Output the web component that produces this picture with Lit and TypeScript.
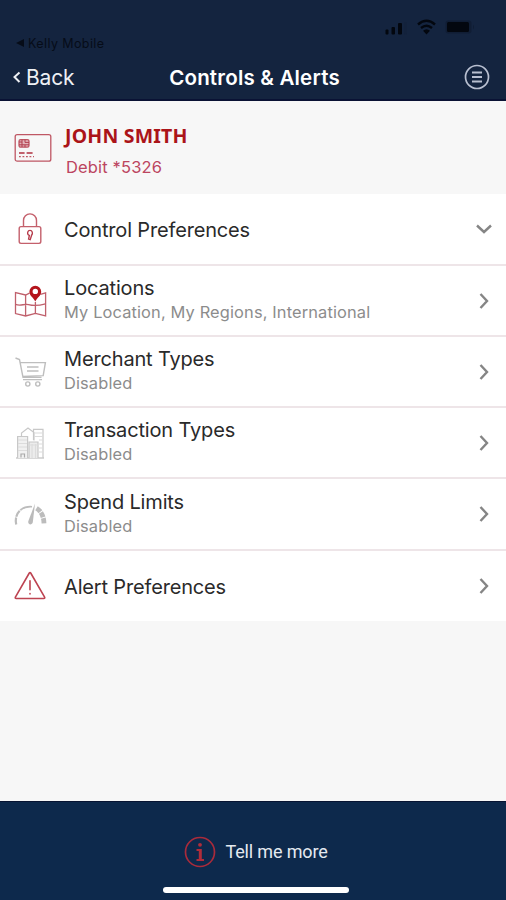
import { LitElement, html, css, svg, nothing } from "lit";
import { customElement } from "lit/decorators.js";

interface Item {
  key: string;
  title: string;
  detail?: string;
  open?: boolean;
}

const items: Item[] = [
  { key: "lock", title: "Control Preferences", open: true },
  { key: "map", title: "Locations", detail: "My Location, My Regions, International" },
  { key: "cart", title: "Merchant Types", detail: "Disabled" },
  { key: "city", title: "Transaction Types", detail: "Disabled" },
  { key: "gauge", title: "Spend Limits", detail: "Disabled" },
  { key: "alert", title: "Alert Preferences" },
];

const glyphs: Record<string, unknown> = {
  card: svg`<g fill="none" stroke="#bf5764" stroke-width="1.3">
    <rect x="1.2" y="4.6" width="35.6" height="26.6" rx="2"/>
    <rect x="5" y="9.600" width="10" height="7.600" rx="1.600" fill="#e2b3b9"/>
    <path d="M5 12h3v5M8 9.600v2.600M11 9.600v2.800h4M11 17.200v-2.400h4M5 14.800h6" stroke="#b2404f" stroke-width="1"/>
    <path d="M5 23h5.600M12.600 23h6" stroke="#b03040"/>
    <path d="M5 26.600h15" stroke-dasharray="1.800 1.700"/></g>`,
  lock: svg`<g fill="none" stroke="#c4606c" stroke-width="1.400">
    <rect x="5.200" y="14.600" width="21.600" height="16.800" rx="1.800"/>
    <path d="M9.500 14.600V8.400a6.500 6.500 0 0 1 13 0v6.200"/>
    <path d="M14.600 23.200c-1.900-1.700-.9-4.800 1.400-4.800s3.200 2.900 1.600 4.900l-1.400 4.300-1.600-.6.900-4.400" stroke="#b63c4b"/></g>`,
  map: svg`<g fill="none" stroke="#c0606c" stroke-width="1.300">
    <path d="M15.500 9.200l-3.900 1.800L1.500 8.600v21l10.100 2.400 9.800-2.600 10.200 2.600V8.800l-5.200 1.600"/>
    <path d="M11.600 11v21M21.400 18v11.500M1.500 20.400c6 2.400 8-1.200 13 .2s10 1.200 17-.8"/></g>
    <path fill="#b4141c" fill-rule="evenodd" d="M21.300 17.500C19.700 13.500 15.400 11.900 15.400 7.700a5.900 5.900 0 0 1 11.800 0c0 4.200-4.300 5.800-5.900 9.800zM21.300 4.700a2.700 2.700 0 1 0 0 5.400 2.700 2.700 0 0 0 0-5.400z"/>`,
  cart: svg`<g fill="none" stroke="#bebebe" stroke-width="1.400">
    <path d="M1.500 3l4 1.600L9 22.400h18.500M6.200 7.600h25.200l-2.200 13-20.700.8"/>
    <path d="M13 12h11.500M13 16h11.500M9 24.600h19"/>
    <circle cx="13.800" cy="29" r="2.100"/><circle cx="23.800" cy="29" r="2.100"/></g>`,
  city: svg`<g fill="none" stroke="#c8c8c8" stroke-width="1.200">
    <path d="M2 32h28" stroke-width="1.400"/>
    <path d="M3.600 32V10.500h10V32" fill="#f1f1f1"/>
    <path d="M7.500 10.500V7l6.500-5 6 4.500v8M19.500 14V3.400h9.500V32"/>
    <path d="M15 32V16h9v16" fill="#ececec"/>
    <path d="M18 18v14M21.500 18v14M4 14h9M4 17.500h9M4 21h9M4 24.500h9M20 7h9M20 10.500h9M25 14h4M25 18h4M25 22h4M25 26h4M15 19h9" stroke="#dcdcdc"/>
    <path d="M7 31.500v-3.500h3.500v3.500" stroke="#aaa"/></g>`,
  gauge: svg`<g fill="none" stroke="#bcbcbc">
    <path d="M2.200 27.500C.8 21 3 15.500 7 12.600" stroke-width="2.200" stroke-dasharray="7 .8"/>
    <path d="M7 12.600C10.500 9.800 14 9.400 18 9.700" stroke-width="1.600"/>
    <path d="M22.500 11.200c4.500 2.800 7.500 8 7.500 16" stroke-width="4.800" stroke-dasharray="5.300 .9"/></g>
    <path d="M21 6.500l-2.200 18.800c-.8 3.200-5.200 2.600-4.500-1z" fill="#bababa"/>`,
  alert: svg`<g fill="none" stroke="#bd4351" stroke-width="1.600" stroke-linejoin="round" stroke-linecap="round">
    <path d="M16.700 4L30.600 28.200q.6 1.300-.8 1.300H2.200Q.8 29.500 1.400 28.200L15.300 4q.7-1 1.400 0z"/>
    <path d="M16 11.700v9M16 24.500v.4"/></g>`,
};

@customElement("app-root")
export class AppRoot extends LitElement {
  static styles = css`
    :host { display: block; font-family: Inter, "Liberation Sans", sans-serif; }
    svg { display: block; flex: none; }
    .screen { display: flex; flex-direction: column; width: 506px; height: 900px; background: #f7f7f7; overflow: hidden; white-space: nowrap; }
    .top { height: 101px; box-sizing: border-box; background: #14243f; border-bottom: 2px solid #0a1234; display: flex; flex-direction: column; }
    .status { height: 55px; display: flex; justify-content: space-between; color: #060c18; }
    .origin { display: flex; align-items: center; gap: 4px; padding: 33px 0 0 16px; height: 20px; font-size: 12.500px; letter-spacing: 0.4px; }
    .signals { padding: 18px 29px 0 0; }
    .nav { flex: 1; display: grid; grid-template-columns: 1fr auto 1fr; align-items: center; color: #fff; }
    .back { display: flex; align-items: center; gap: 5px; padding-left: 12px; font-size: 21px; letter-spacing: -0.2px; color: #eef0f4; }
    .heading { font-size: 20.500px; font-weight: 600; letter-spacing: 0.2px; padding-left: 3px; }
    .menu { justify-self: end; padding-right: 16px; }
    .account { height: 93px; display: flex; background: #f7f7f7; }
    .picture { width: 65px; box-sizing: border-box; padding: 29px 0 0 14px; }
    .who { padding-top: 21px; }
    .name { font: 700 19.500px/27px "Noto Sans", sans-serif; color: #ab1419; letter-spacing: 0.2px; }
    .number { font-size: 16.500px; line-height: 20px; padding: 8px 0 0 1px; color: #bc4560; letter-spacing: 0.15px; }
    .list { height: 427px; display: grid; grid-template-rows: 72px 71px 71px 71px 72px 70px; background: #fff; }
    .row { display: grid; grid-template-columns: 64px 1fr auto; align-items: center; box-sizing: border-box; padding-right: 13px; border-bottom: 2px solid #eee5e8; }
    .row:last-child { border-bottom: 0; }
    .glyph { padding-left: 14px; }
    .title { font-size: 20px; line-height: 25px; color: #2a2a2a; letter-spacing: -0.16px; }
    .detail { font-size: 16.400px; line-height: 20px; color: #8c8c8c; letter-spacing: 0.14px; }
    .double { padding-bottom: 3px; }
    .double .detail { padding-top: 1px; }
    .single { padding-top: 2px; }
    .space { flex: 1; }
    .footer { height: 99px; box-sizing: border-box; background: #0d294c; border-top: 1px solid #071432; display: flex; flex-direction: column; align-items: center; padding-left: 6px; }
    .more { padding-top: 17px; height: 66px; display: flex; align-items: center; gap: 9px; font: 18px/22px Roboto, sans-serif; letter-spacing: -0.15px; color: #e4e9f0; }
    .home { width: 186px; height: 6px; border-radius: 3px; background: #fff; margin-top: 2px; }
  `;

  private glyph(key: string, size = 34) {
    return html`<svg width=${size} height="34" viewBox="0 0 ${size} 34">${glyphs[key]}</svg>`;
  }

  render() {
    return html`<div class="screen">
      <header class="top">
        <div class="status">
          <div class="origin"><svg width="8" height="8"><path d="M8 0v8L0 4z" fill="currentColor" /></svg><span>Kelly Mobile</span></div>
          <svg class="signals" width="92" height="18" viewBox="0 0 92 18" fill="#03070f">
            <rect x="0.500" y="11.500" width="3" height="5" rx="1" /><rect x="6.500" y="9" width="3.500" height="7.500" rx="1" /><rect x="13" y="5" width="4" height="11.500" rx="1" />
            <rect x="19" y="4" width="3" height="12.500" rx="1" fill="#13223c" />
            <path d="M33 6.500q8.500-7.500 17 0M36 10q5.500-4.500 11 0" fill="none" stroke="#03070f" stroke-width="2.400" /><path d="M38 12.800q3.500-3 7 0l-3.500 3.700z" />
            <rect x="60.500" y="2.500" width="26" height="13" rx="3" fill="#101d34" /><rect x="62" y="4" width="22" height="10" rx="1.500" /><path d="M88 6.500q2 2.500 0 5z" fill="#101d34" />
          </svg>
        </div>
        <nav class="nav">
          <div class="back"><svg width="9" height="14"><path d="M7.500 2.500L2.500 7l5 5" fill="none" stroke="currentColor" stroke-width="2" /></svg><span>Back</span></div>
          <div class="heading">Controls &amp; Alerts</div>
          <svg class="menu" width="26" height="26" viewBox="0 0 26 26" fill="none" stroke="#b8bfd0" stroke-width="1.700"><circle cx="13" cy="13" r="11.500" /><path d="M8 8.500h10M8 13h10M8 17.500h10" stroke-width="2" /></svg>
        </nav>
      </header>
      <section class="account">
        <div class="picture">${this.glyph("card", 38)}</div>
        <div class="who"><div class="name">JOHN SMITH</div><div class="number">Debit *5326</div></div>
      </section>
      <main class="list">
        ${items.map((item) => html`<div class="row">
          <div class="glyph">${this.glyph(item.key)}</div>
          <div class=${item.detail ? "double" : "single"}><div class="title">${item.title}</div>${item.detail ? html`<div class="detail">${item.detail}</div>` : nothing}</div>
          <svg width="18" height="18" fill="none" stroke="#858585" stroke-width="2.400">${item.open ? svg`<path d="M2 5.500l7 6.500 7-6.500"/>` : svg`<path d="M5.500 2l6.500 7-6.500 7"/>`}</svg>
        </div>`)}
      </main>
      <div class="space"></div>
      <footer class="footer">
        <div class="more">
          <svg width="32" height="32" viewBox="0 0 32 32"><circle cx="16" cy="16" r="14.500" fill="none" stroke="#a92b3b" stroke-width="1.700" /><circle cx="16" cy="8.800" r="1.900" fill="#b02c3a" /><path d="M12.500 13h5.300v10h2.200v2h-7.500v-2h2.300v-8h-2.300z" fill="#b02c3a" /></svg>
          <span>Tell me more</span>
        </div>
        <div class="home"></div>
      </footer>
    </div>`;
  }
}
